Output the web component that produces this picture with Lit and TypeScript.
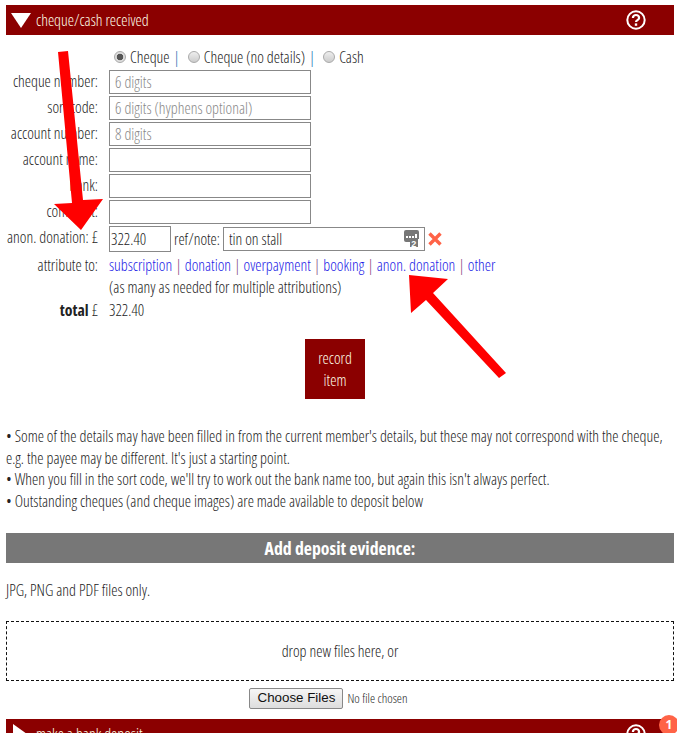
import { LitElement, html, css } from "lit";
import { customElement } from "lit/decorators.js";

const Q = html`<svg class="help" viewBox="0 0 20 20" width="20" height="20"><circle cx="10" cy="10" r="8.7" fill="none" stroke="#fff" stroke-width="2"/><path d="M6.9 8a3.1 3 0 0 1 6.2 0c0 2-3.1 2.2-3.1 4" fill="none" stroke="#fff" stroke-width="2.2"/><rect x="8.8" y="13.4" width="2.4" height="2.4" fill="#fff"/></svg>`;

@customElement("app-root")
export class AppRoot extends LitElement {
  static styles = css`
    :host { display: block; position: relative; height: 733px; overflow: hidden; background: #fff; color: #222;
      font-family: "Open Sans", sans-serif; font-weight: 300; font-stretch: 75%; font-size: 15.8px; line-height: 22px; }
    .page { padding: 5px 3px 0 6px; display: flex; flex-direction: column; }
    .bar { background: #8b0000; color: #ffffe8; height: 30px; display: flex; align-items: center; gap: 5px; padding: 0 28px 0 5px; position: relative; flex: none; }
    .bar .title { flex: 1; }
    .tri { display: block; }
    .types { display: flex; align-items: center; height: 24px; margin: 10px 0 1px 103px; }
    .types input { appearance: none; margin: 0 4px 0 5px; width: 12px; height: 12px; border-radius: 50%; border: 1px solid #aaa; background: linear-gradient(#eee, #ccc); position: relative; flex: none; }
    .types input:checked { background: radial-gradient(circle, #555 0 3px, #ddd 3.6px); }
    .sep { color: #1c6fb0; margin: 0 3px 0 4px; }
    .form { display: grid; grid-template-columns: 92px 1fr; column-gap: 11px; }
    .lab { text-align: right; white-space: nowrap; }
    .field { border: 1px solid #888; box-sizing: border-box; height: 24px; width: 202px; padding: 0 5px; font: inherit; color: #222; display: block; margin-bottom: 2px; background: #fff; outline: none; }
    .field::placeholder { color: #888; opacity: 1; }
    .lab.r { line-height: 22px; }
    .don { display: flex; align-items: center; height: 26px; }
    .amt { width: 62px; height: 26px; padding: 0 1px; margin: 0; }
    .ref-l { margin: 0 3px; }
    .ref { position: relative; width: 202px; height: 24px; }
    .ref .field { margin: 0; padding-left: 5px; }
    .ref svg { position: absolute; right: 6px; top: 3px; }
    .del { margin-left: 3px; display: block; }
    .links { height: 22px; margin-top: 2px; white-space: nowrap; }
    .links a { color: #1a1ae6; text-decoration: none; }
    .links i { font-style: normal; color: #804080; margin: 0 3.2px; }
    .note { height: 22px; }
    .tot { height: 24px; line-height: 24px; }
    .tot b { font-weight: 700; }
    .rec { align-self: center; width: 60px; height: 60px; margin: 17px 10px 0 0; background: #8b0000; color: #ffffe8; text-align: center; font: inherit; border: 0; padding: 0; }
    .text { margin: 27px 0 0; line-height: 21.6px; width: 668px; }
    .ev { margin-top: 21px; background: #777; color: #fff; height: 30px; line-height: 30px; text-align: center; font-weight: 700; font-size: 17.8px; }
    .only { margin: 16px 0 0; height: 22px; }
    .drop { margin-top: 20px; height: 60px; box-sizing: border-box; border: 1px dashed #111; display: flex; align-items: center; justify-content: center; }
    .file { display: flex; justify-content: center; align-items: center; gap: 4px; height: 20px; margin: 7px 0 0; font-size: 13px; padding-right: 23px; }
    .file button { font: 400 13.33px/16px "Liberation Sans", Arial, sans-serif; font-stretch: normal; width: 94px; height: 21px; padding: 0; border: 1px solid #888; border-radius: 2px; background: linear-gradient(#f6f6f6, #ddd); color: #111; }
    .bot { margin-top: 11px; }
    .badge { position: absolute; left: 659px; top: 715px; width: 20px; height: 20px; border-radius: 50%; background: #ff6347; color: #fff; font: 700 12px/20px "Open Sans", sans-serif; text-align: center; }
    .arrows { position: absolute; left: 0; top: 0; pointer-events: none; }
  `;

  render() {
    const rows: [string, string][] = [
      ["cheque number:", "6 digits"],
      ["sort code:", "6 digits (hyphens optional)"],
      ["account number:", "8 digits"],
      ["account name:", ""],
      ["bank:", ""],
      ["comment:", ""],
    ];
    return html`
      <div class="page">
        <div class="bar">
          <svg class="tri" width="20" height="15" viewBox="0 0 20 15"><path d="M0 0H20L10 15Z" fill="#fff"/></svg>
          <span class="title">cheque/cash received</span>${Q}
        </div>
        <div class="types">
          <input type="radio" name="t" checked /><span>Cheque</span><span class="sep">|</span>
          <input type="radio" name="t" /><span>Cheque (no details)</span><span class="sep">|</span>
          <input type="radio" name="t" /><span>Cash</span>
        </div>
        <div class="form">
          ${rows.map(([l, p]) => html`<div class="lab r">${l}</div><input class="field" placeholder=${p} />`)}
          <div class="lab">anon. donation: £</div>
          <div class="don">
            <input class="field amt" value="322.40" />
            <span class="ref-l">ref/note:</span>
            <div class="ref">
              <input class="field" value="tin on stall" />
              <svg width="15" height="18" viewBox="0 0 15 18"><path d="M2 0H13a2 2 0 0 1 2 2V9H14V17H6V12H2a2 2 0 0 1-2-2V2a2 2 0 0 1 2-2Z" fill="#777"/><rect x="2" y="6" width="2" height="2" fill="#fff"/><rect x="5" y="6" width="2" height="2" fill="#fff"/><rect x="8" y="6" width="2" height="2" fill="#fff"/><rect x="11" y="4" width="2" height="4" fill="#fff"/><text x="7.2" y="16.5" font-size="9" font-weight="700" font-family="Liberation Sans" fill="#fff">2</text></svg>
            </div>
            <svg class="del" width="14" height="14" viewBox="0 0 14 14"><path d="M1.5 1.5L12.5 12.5M12.5 1.5L1.5 12.5" stroke="#ff6347" stroke-width="3.4"/></svg>
          </div>
          <div class="lab links">attribute to:</div>
          <div class="links"><a>subscription</a><i>|</i><a>donation</a><i>|</i><a>overpayment</a><i>|</i><a>booking</a><i>|</i><a>anon. donation</a><i>|</i><a>other</a></div>
          <div></div><div class="note">(as many as needed for multiple attributions)</div>
          <div class="lab tot"><b>total</b> £</div><div class="tot">322.40</div>
        </div>
        <button class="rec">record<br />item</button>
        <div class="text">
          • Some of the details may have been filled in from the current member's details, but these may not correspond with the cheque, e.g. the payee may be different. It's just a starting point.<br />
          • When you fill in the sort code, we'll try to work out the bank name too, but again this isn't always perfect.<br />
          • Outstanding cheques (and cheque images) are made available to deposit below
        </div>
        <div class="ev">Add deposit evidence:</div>
        <div class="only">JPG, PNG and PDF files only.</div>
        <div class="drop">drop new files here, or</div>
        <div class="file"><button>Choose Files</button><span>No file chosen</span></div>
        <div class="bar bot">
          <svg class="tri" width="20" height="20" viewBox="0 0 20 20"><path d="M2 0L16 10L2 20Z" fill="#fff"/></svg>
          <span class="title">make a bank deposit</span>${Q}
        </div>
      </div>
      <div class="badge">1</div>
      <svg class="arrows" width="677" height="733" viewBox="0 0 677 733">
        <path d="M58 52L68 51L83 200L103 199L81 230L54 204L72 203Z" fill="#f00"/>
        <path d="M409 275L448 279L433 293L506 373L499 378L426 300L411 313Z" fill="#f00"/>
      </svg>
    `;
  }
}
